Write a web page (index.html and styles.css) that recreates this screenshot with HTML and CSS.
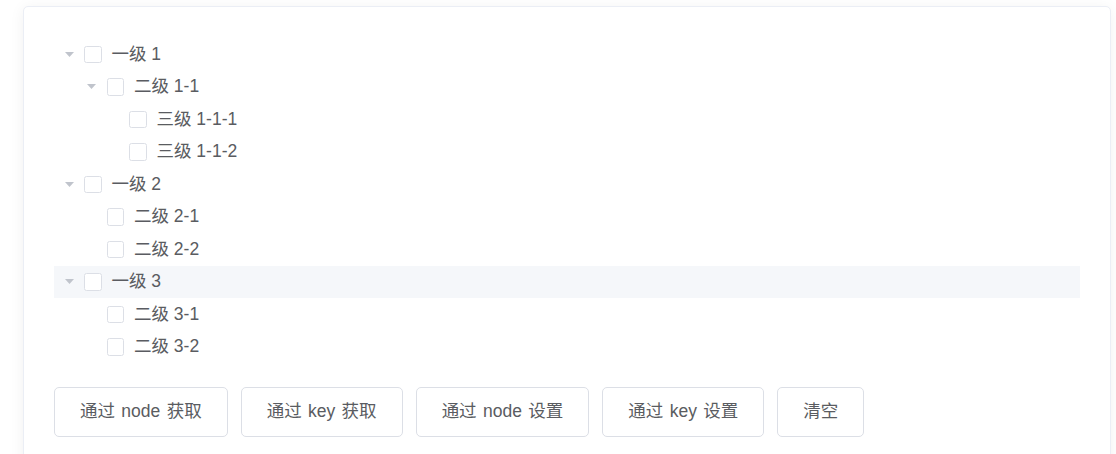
FILE: index.html
```html
<!DOCTYPE html>
<html lang="zh">
<head>
<meta charset="utf-8">
<link rel="stylesheet" href="styles.css">
</head>
<body>
<div class="card">
  <div class="tree">
    <div class="row lv0"><span class="caret"><svg width="9" height="5" viewBox="0 0 9 5"><polygon points="0,0 9,0 4.5,5" fill="#c0c4cc"/></svg></span><span class="cb"></span><span class="label">一级 1</span></div>
    <div class="row lv1"><span class="caret"><svg width="9" height="5" viewBox="0 0 9 5"><polygon points="0,0 9,0 4.5,5" fill="#c0c4cc"/></svg></span><span class="cb"></span><span class="label">二级 1-1</span></div>
    <div class="row lv2"><span class="caret leaf"></span><span class="cb"></span><span class="label">三级 1-1-1</span></div>
    <div class="row lv2"><span class="caret leaf"></span><span class="cb"></span><span class="label">三级 1-1-2</span></div>
    <div class="row lv0"><span class="caret"><svg width="9" height="5" viewBox="0 0 9 5"><polygon points="0,0 9,0 4.5,5" fill="#c0c4cc"/></svg></span><span class="cb"></span><span class="label">一级 2</span></div>
    <div class="row lv1"><span class="caret leaf"></span><span class="cb"></span><span class="label">二级 2-1</span></div>
    <div class="row lv1"><span class="caret leaf"></span><span class="cb"></span><span class="label">二级 2-2</span></div>
    <div class="row lv0 hover"><span class="caret"><svg width="9" height="5" viewBox="0 0 9 5"><polygon points="0,0 9,0 4.5,5" fill="#c0c4cc"/></svg></span><span class="cb"></span><span class="label">一级 3</span></div>
    <div class="row lv1"><span class="caret leaf"></span><span class="cb"></span><span class="label">二级 3-1</span></div>
    <div class="row lv1"><span class="caret leaf"></span><span class="cb"></span><span class="label">二级 3-2</span></div>
  </div>
  <div class="buttons">
    <button class="btn">通过 node 获取</button>
    <button class="btn">通过 key 获取</button>
    <button class="btn">通过 node 设置</button>
    <button class="btn">通过 key 设置</button>
    <button class="btn">清空</button>
  </div>
</div>
</body>
</html>
```

FILE: styles.css
```css
html, body {
  margin: 0;
  padding: 0;
  background: #ffffff;
}
body {
  padding: 6px 0 0 23px;
  width: 1116px;
  height: 454px;
  box-sizing: border-box;
  overflow: hidden;
  font-family: "Liberation Sans", "Noto Sans CJK SC", sans-serif;
  color: #5a5c61;
}
.card {
  width: 1088px;
  box-sizing: border-box;
  border: 1px solid #ebeef5;
  border-radius: 5px;
  box-shadow: 0 2px 15px rgba(0, 0, 0, 0.06);
  background: #fff;
  padding: 31px 30px 40px 30px;
}
.tree {
  display: flex;
  flex-direction: column;
}
.row {
  height: 32.5px;
  display: flex;
  align-items: center;
  font-size: 17.5px;
  color: #5a5c61;
}
.row.hover {
  background: #f5f7fa;
}
.lv1 { padding-left: 22.5px; }
.lv2 { padding-left: 45px; }
.caret {
  width: 30px;
  height: 30px;
  display: flex;
  align-items: center;
  justify-content: center;
  flex: none;
}
.caret svg { display: block; }
.cb {
  width: 17.5px;
  height: 17.5px;
  box-sizing: border-box;
  border: 1px solid #dcdfe6;
  border-radius: 2.5px;
  background: #fff;
  margin-right: 10px;
  flex: none;
}
.label {
  line-height: 1;
}
.buttons {
  display: flex;
  gap: 13px;
  margin-top: 24px;
}
.btn {
  font-family: "Liberation Sans", "Noto Sans CJK SC", sans-serif;
  font-size: 17.5px;
  line-height: 1;
  word-spacing: 1.5px;
  color: #5a5c61;
  background: #fff;
  border: 1px solid #dcdfe6;
  border-radius: 5px;
  padding: 15px 25px;
  margin: 0;
}
```
